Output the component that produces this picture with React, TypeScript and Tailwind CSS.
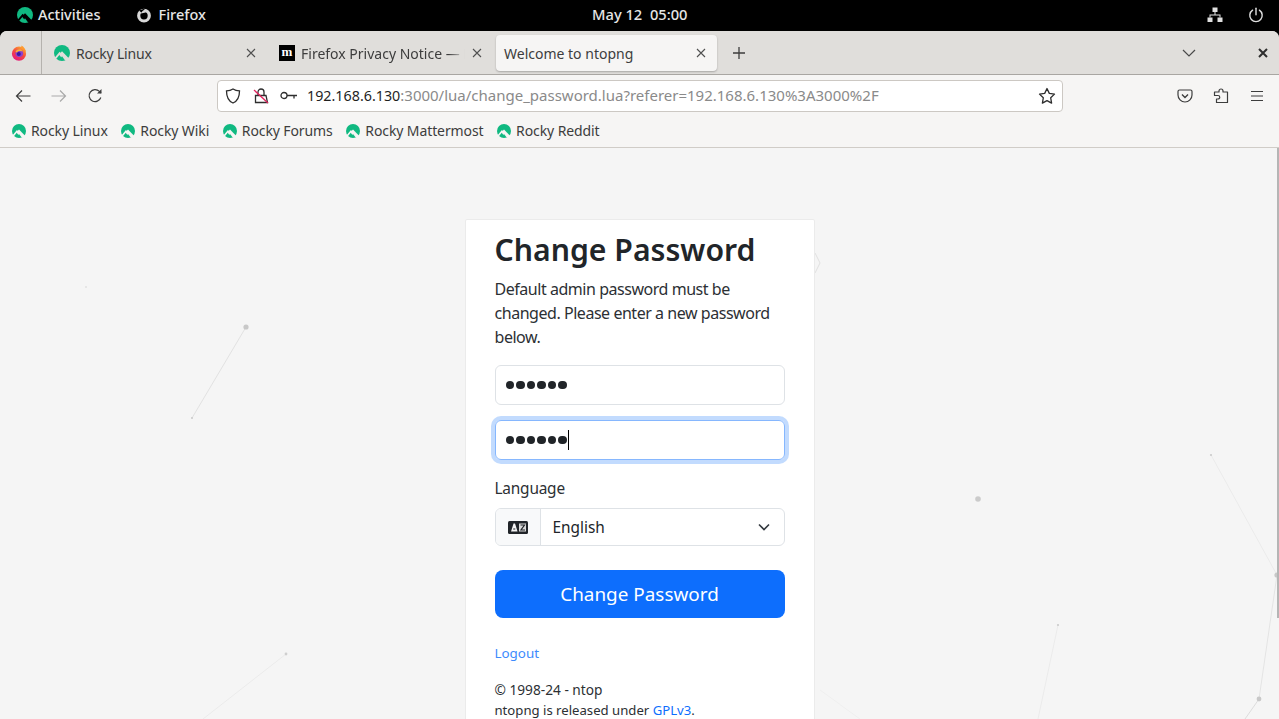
import React from "react";

const font = { fontFamily: '"Noto Sans", sans-serif' };

function Rocky({ size = 16 }: { size?: number }) {
  const id = React.useId();
  return (
    <svg width={size} height={size} viewBox="0 0 16 16" className="shrink-0">
      <mask id={id}>
        <rect width="16" height="16" fill="#fff" />
        <path d="M0.500 14.500L5.700 8.200L11 13.500" stroke="#000" strokeWidth="1.900" fill="none" />
        <path d="M5 9.500L8 6.300L16 14.500L10 16z" fill="#000" />
        <path d="M4.500 16L8 11.300L11.500 16z" fill="#fff" />
      </mask>
      <circle cx="8" cy="8" r="8" fill="#10b981" mask={`url(#${id})`} />
    </svg>
  );
}

function FirefoxLogo() {
  return (
    <svg width="16" height="16" viewBox="0 0 16 16" className="shrink-0">
      <defs>
        <linearGradient id="ff" x1="0.800" y1="0" x2="0.200" y2="1">
          <stop offset="0" stopColor="#ffb02e" />
          <stop offset="0.500" stopColor="#f5473f" />
          <stop offset="1" stopColor="#e31587" />
        </linearGradient>
      </defs>
      <circle cx="8" cy="8.700" r="7.100" fill="url(#ff)" />
      <path d="M10.500 0.500c2.500 1.500 4.500 4 4.500 7-1-2.500-3-3.500-5-4z" fill="#ff9a2e" />
      <circle cx="8.300" cy="8.300" r="3.800" fill="#8a3fd0" />
      <circle cx="7.800" cy="9" r="2" fill="#3c1c9e" />
      <path d="M4.500 7c.5-2 3-3.300 5.500-2.500L11.800 6.500C10 5.600 7 5.500 6 7.500z" fill="#ffb02e" />
    </svg>
  );
}

function Close({ cls = "" }: { cls?: string }) {
  return (
    <svg width="10" height="10" viewBox="0 0 10 10" className={cls}>
      <path d="M1 1l8 8M9 1L1 9" stroke="currentColor" strokeWidth="1.100" fill="none" />
    </svg>
  );
}

function Bookmark({ label }: { label: string }) {
  return (
    <div className="flex items-center gap-[5px]">
      <Rocky size={14} />
      <span className="text-[14px] tracking-[-0.1px] text-[#3d3d3d] whitespace-nowrap">{label}</span>
    </div>
  );
}

function Particles() {
  const lines: [number, number, number, number, string][] = [
    [246, 327, 192, 418, "#e2e2e2"],
    [286, 654, 203, 719, "#ebebeb"],
    [1211, 455, 1277, 575, "#ebebeb"],
    [1277, 575, 1259, 699, "#e4e4e4"],
    [1259, 699, 1245, 719, "#dcdcdc"],
    [1058, 625, 1038, 719, "#ebebeb"],
    [820, 690, 860, 719, "#efefef"],
  ];
  const dots: [number, number, number, string][] = [
    [86, 287, 0.800, "#d4d4d4"],
    [246, 327, 2.600, "#c8c8c8"],
    [192, 418, 1, "#c8c8c8"],
    [286, 654, 1.400, "#cfcfcf"],
    [978, 499, 2.800, "#cbcbcb"],
    [1211, 455, 1.100, "#cbcbcb"],
    [1058, 625, 1.100, "#cbcbcb"],
    [1277, 575, 2.600, "#c8c8c8"],
    [1259, 699, 2.400, "#c8c8c8"],
  ];
  return (
    <svg width="1279" height="571" viewBox="0 148 1279 571" className="absolute left-0 top-0">
      {lines.map(([a, b, c, d, s], i) => (
        <line key={i} x1={a} y1={b} x2={c} y2={d} stroke={s} strokeWidth="1" />
      ))}
      {dots.map(([x, y, r, f], i) => (
        <circle key={i} cx={x} cy={y} r={r} fill={f} />
      ))}
      <path d="M815 253l5 10-5 10" fill="none" stroke="#e0e0e0" strokeWidth="1" />
    </svg>
  );
}

function Dots() {
  return (
    <>
      {[0, 1, 2, 3, 4, 5].map((i) => (
        <span key={i} className="w-[8.500px] h-[8.500px] rounded-full bg-[#212529]" />
      ))}
    </>
  );
}

export default function App() {
  return (
    <div className="w-[1279px] h-[719px] overflow-hidden bg-black flex flex-col" style={font}>
      {/* GNOME top bar */}
      <div className="h-[31px] shrink-0 bg-black flex items-center justify-between text-[#e6e6e6] text-[14.500px] font-medium relative pb-[2px]">
        <div className="flex items-center">
          <div className="flex items-center gap-[5px] pl-[17px]">
            <Rocky size={16} />
            <span>Activities</span>
          </div>
          <div className="flex items-center gap-[6px] ml-[36px]">
            <svg width="16" height="16" viewBox="0 0 16 16" fill="none">
              <circle cx="8" cy="8.700" r="5.300" stroke="#d8d8d8" strokeWidth="3.200" />
              <path d="M3 3.500L6.500 6.500L9 1.500z" fill="#000" />
              <path d="M5 6.500C6 3.500 8.500 3 10 2.300L9.500 5.500z" fill="#d8d8d8" />
            </svg>
            <span>Firefox</span>
          </div>
        </div>
        <div className="absolute left-[592px] top-[3px] whitespace-nowrap text-[14.700px]">May 12&nbsp;&nbsp;05:00</div>
        <div className="flex items-center gap-[25px] pr-[15px]">
          <svg width="16" height="16" viewBox="0 0 16 16" fill="#e0e0e0">
            <rect x="5.500" y="0.500" width="5" height="4.500" />
            <rect x="0.500" y="10.500" width="5" height="4.500" />
            <rect x="10.500" y="10.500" width="5" height="4.500" />
            <path d="M7.500 5h1v2.500H13.500V10.500h-1V8.500h-9v2h-1V7.500h5z" />
          </svg>
          <svg width="16" height="16" viewBox="0 0 16 16" fill="none" stroke="#e0e0e0" strokeWidth="1.400" strokeLinecap="round">
            <path d="M8 1.200v6.600" />
            <path d="M4.600 3.200a6.200 6.200 0 1 0 6.800 0" />
          </svg>
        </div>
      </div>

      {/* Firefox window */}
      <div className="flex-1 flex flex-col rounded-t-[7px] overflow-hidden bg-[#f9f9f8] min-h-0">
        {/* Tab strip */}
        <div className="h-[44px] shrink-0 bg-[#e0dedb] border-b border-[#a9a6a2] flex items-stretch text-[14px] text-[#3d3d3d]">
          <div className="w-[42px] border-r border-[#b5b2ae] flex items-center pl-[11px] shrink-0 h-[43px]">
            <FirefoxLogo />
          </div>
          <div className="w-[228px] flex items-center pl-[12px] pr-[14px] gap-[6px] shrink-0">
            <Rocky size={16} />
            <span className="flex-1 tracking-[-0.2px] pt-[1px]">Rocky Linux</span>
            <Close cls="text-[#505050]" />
          </div>
          <div className="w-[226px] flex items-center pl-[9px] gap-[6px] shrink-0">
            <div className="w-[16px] h-[16px] bg-black flex items-center justify-center shrink-0">
              <span className="text-white text-[13px] font-bold leading-none mt-[-3px]" style={{ fontFamily: '"Liberation Serif", serif' }}>m</span>
            </div>
            <span className="flex-1 overflow-hidden whitespace-nowrap pt-[1px]" style={{ maskImage: "linear-gradient(to right, black 90%, transparent)" }}>Firefox Privacy Notice — Mozilla</span>
            <Close cls="text-[#505050] ml-[1px] mr-[14px]" />
          </div>
          <div className="w-[221px] h-[36px] mt-[4px] bg-[#f6f5f4] rounded-[4px] shadow-[0_1px_2px_rgba(0,0,0,0.25)] flex items-center pl-[8px] pr-[11px] shrink-0">
            <span className="flex-1">Welcome to ntopng</span>
            <Close cls="text-[#505050]" />
          </div>
          <div className="w-[44px] flex items-center justify-center">
            <svg width="14" height="14" viewBox="0 0 14 14"><path d="M7 1v12M1 7h12" stroke="#3d3d3d" strokeWidth="1.300" /></svg>
          </div>
          <div className="flex-1 flex items-center justify-end">
            <svg width="14" height="8" viewBox="0 0 14 8" className="mr-[62px]"><path d="M1 1l6 6 6-6" stroke="#4a4a4a" strokeWidth="1.200" fill="none" /></svg>
            <svg width="10" height="10" viewBox="0 0 10 10" className="mr-[11px]"><path d="M1 1l8 8M9 1L1 9" stroke="#2e2e2e" strokeWidth="2" fill="none" /></svg>
          </div>
        </div>

        {/* Nav bar */}
        <div className="h-[41px] shrink-0 bg-[#f6f5f4] flex items-center text-[#3d3d3d]">
          <div className="flex items-center w-[217px] shrink-0 pl-[15px]">
            <svg width="16" height="16" viewBox="0 0 16 16" fill="none" stroke="#3d3d3d" strokeWidth="1.200"><path d="M15.500 8H1.500M7 2.500L1.500 8 7 13.500" /></svg>
            <svg width="16" height="16" viewBox="0 0 16 16" fill="none" stroke="#a9a9a9" strokeWidth="1.200" className="ml-[20px]"><path d="M.5 8h14M9 2.500L14.500 8 9 13.500" /></svg>
            <svg width="16" height="16" viewBox="0 0 16 16" fill="none" stroke="#3d3d3d" strokeWidth="1.200" className="ml-[20px]"><path d="M13.800 9.500A6 6 0 1 1 12.400 3.400L14 5" /><path d="M14.500 1v4.600H10z" fill="#3d3d3d" stroke="none" /></svg>
          </div>
          <div className="w-[846px] h-[32px] shrink-0 bg-white border border-[#ccc8c3] rounded-[4px] flex items-center pl-[7px] pr-[6px]">
            <svg width="16" height="16" viewBox="0 0 16 16" fill="none" stroke="#2e2e2e" strokeWidth="1.300" className="shrink-0"><path d="M8 1c2 1.300 4.200 1.800 6.500 1.900C14.500 9 12.500 13 8 15 3.500 13 1.500 9 1.500 2.900 3.800 2.800 6 2.300 8 1z" /></svg>
            <svg width="16" height="16" viewBox="0 0 16 16" fill="none" className="ml-[12px] shrink-0">
              <path d="M5 7V4a3 3 0 0 1 6 0v3M2.500 7.500h10.500l1.500 7H2.500z" stroke="#2e2e2e" strokeWidth="1.300" />
              <path d="M1 2l14 13" stroke="#e0245e" strokeWidth="1.300" />
            </svg>
            <svg width="18" height="10" viewBox="0 0 18 10" fill="none" stroke="#2e2e2e" strokeWidth="1.300" className="ml-[11px] shrink-0"><circle cx="4" cy="4.500" r="3" /><path d="M7 4.500h10M14 4.500v3" /></svg>
            <span className="ml-[9px] text-[15px] whitespace-nowrap text-[#8a8a8a] flex-1"><span className="text-[#1f1f1f] text-[14.300px]">192.168.6.130</span>:3000/lua/change_password.lua?referer=192.168.6.130%3A3000%2F</span>
            <svg width="18" height="18" viewBox="0 0 18 18" fill="none" stroke="#2e2e2e" strokeWidth="1.300" className="shrink-0"><path d="M9 1.500l2.300 4.900 5.200.7-3.800 3.700.9 5.300L9 13.600l-4.600 2.500.9-5.300L1.500 7.100l5.200-.7z" strokeLinejoin="round" /></svg>
          </div>
          <div className="flex-1 flex items-center pl-[114px]">
            <svg width="16" height="16" viewBox="0 0 16 16" fill="none" stroke="#3d3d3d" strokeWidth="1.200"><path d="M2.500 2h11A1.500 1.500 0 0 1 15 3.500V7a7 7 0 0 1-14 0V3.500A1.500 1.500 0 0 1 2.500 2z" /><path d="M5 6.500l3 3 3-3" strokeWidth="1.400" /></svg>
            <svg width="16" height="16" viewBox="0 0 16 16" fill="none" stroke="#3d3d3d" strokeWidth="1.200" className="ml-[20px]"><path d="M6 4V3a2 2 0 0 1 4 0v1h4.500v10.500H3.500V11h1.500a1.700 1.700 0 0 0 0-3.500H1.500V4z" strokeLinejoin="round" /></svg>
            <svg width="14" height="12" viewBox="0 0 14 12" stroke="#3d3d3d" strokeWidth="1.200" className="ml-[21px]"><path d="M1 1.500h12M1 6h12M1 10.500h12" /></svg>
          </div>
        </div>

        {/* Bookmarks */}
        <div className="h-[32px] shrink-0 bg-[#f6f5f4] border-b border-[#d0ccc7] flex items-center pl-[12px] gap-[13.600px] pb-[2px]">
          <Bookmark label="Rocky Linux" />
          <Bookmark label="Rocky Wiki" />
          <Bookmark label="Rocky Forums" />
          <Bookmark label="Rocky Mattermost" />
          <Bookmark label="Rocky Reddit" />
        </div>

        {/* Page */}
        <div className="flex-1 bg-[#f5f5f5] relative overflow-hidden flex justify-center items-start min-h-0">
          <Particles />
          <div className="absolute right-0 top-0 w-[2px] h-[470px] bg-[#b5b5b5]" />
          <div className="relative mt-[71px] w-[350px] h-[560px] shrink-0 bg-white border border-[#ebebeb] rounded-[2px] px-[29px] text-[#212529]">
            <h1 className="text-[30.200px] leading-[36px] font-semibold mt-[12px] mb-[9px] whitespace-nowrap">Change Password</h1>
            <p className="text-[16px] tracking-[-0.46px] leading-[24px] text-[#2c3034] mb-[16px]">
              Default admin password must be changed. Please enter a new password below.
            </p>
            <div className="h-[40px] border border-[#dee2e6] rounded-[6px] flex items-center pl-[10px] gap-[2px]">
              <Dots />
            </div>
            <div className="h-[40px] mt-[15px] border border-[#86b7fe] rounded-[6px] shadow-[0_0_0_4px_rgba(13,110,253,0.25)] flex items-center pl-[10px] gap-[2px]">
              <Dots />
              <span className="w-px h-[20px] bg-black ml-[-1px]" />
            </div>
            <div className="text-[15.400px] tracking-[-0.2px] leading-[24px] mt-[17px] text-[#2c3034]">Language</div>
            <div className="h-[38px] mt-[7px] border border-[#dee2e6] rounded-[6px] flex overflow-hidden">
              <div className="w-[45px] bg-[#f8f9fa] border-r border-[#dee2e6] flex items-center justify-center shrink-0">
                <svg width="20" height="13" viewBox="0 0 20 13">
                  <rect width="20" height="13" rx="1.500" fill="#212529" />
                  <rect x="11" y="2.500" width="7" height="8" fill="#d9d9d9" />
                  <path d="M3 10.500l2.500-8h1.500l2.500 8z" fill="#f4f4f4" />
                  <path d="M5.200 8h2.100" stroke="#212529" strokeWidth="1" />
                  <path d="M12.500 4h4l-3.500 5h4" stroke="#212529" strokeWidth="1.200" fill="none" />
                </svg>
              </div>
              <div className="flex-1 flex items-center pl-[12px] pr-[14px] justify-between">
                <span className="text-[15.400px] pt-[1px]">English</span>
                <svg width="12" height="8" viewBox="0 0 12 8"><path d="M1 1.500l5 5 5-5" stroke="#343a40" strokeWidth="1.600" fill="none" /></svg>
              </div>
            </div>
            <div className="h-[48px] mt-[24px] pt-[1px] bg-[#0d6efd] rounded-[8px] flex items-center justify-center text-white text-[18.900px]">Change Password</div>
            <div className="text-[13.400px] leading-[20px] mt-[25px] text-[#3d8bfd]">Logout</div>
            <div className="leading-[21px] mt-[16px] text-[#2c3034] whitespace-nowrap">
              <div className="text-[13.700px]">© 1998-24 - ntop</div>
              <div className="text-[13.150px]">ntopng is released under <span className="text-[#0d6efd]">GPLv3</span>.</div>
            </div>
          </div>
        </div>
      </div>
    </div>
  );
}
